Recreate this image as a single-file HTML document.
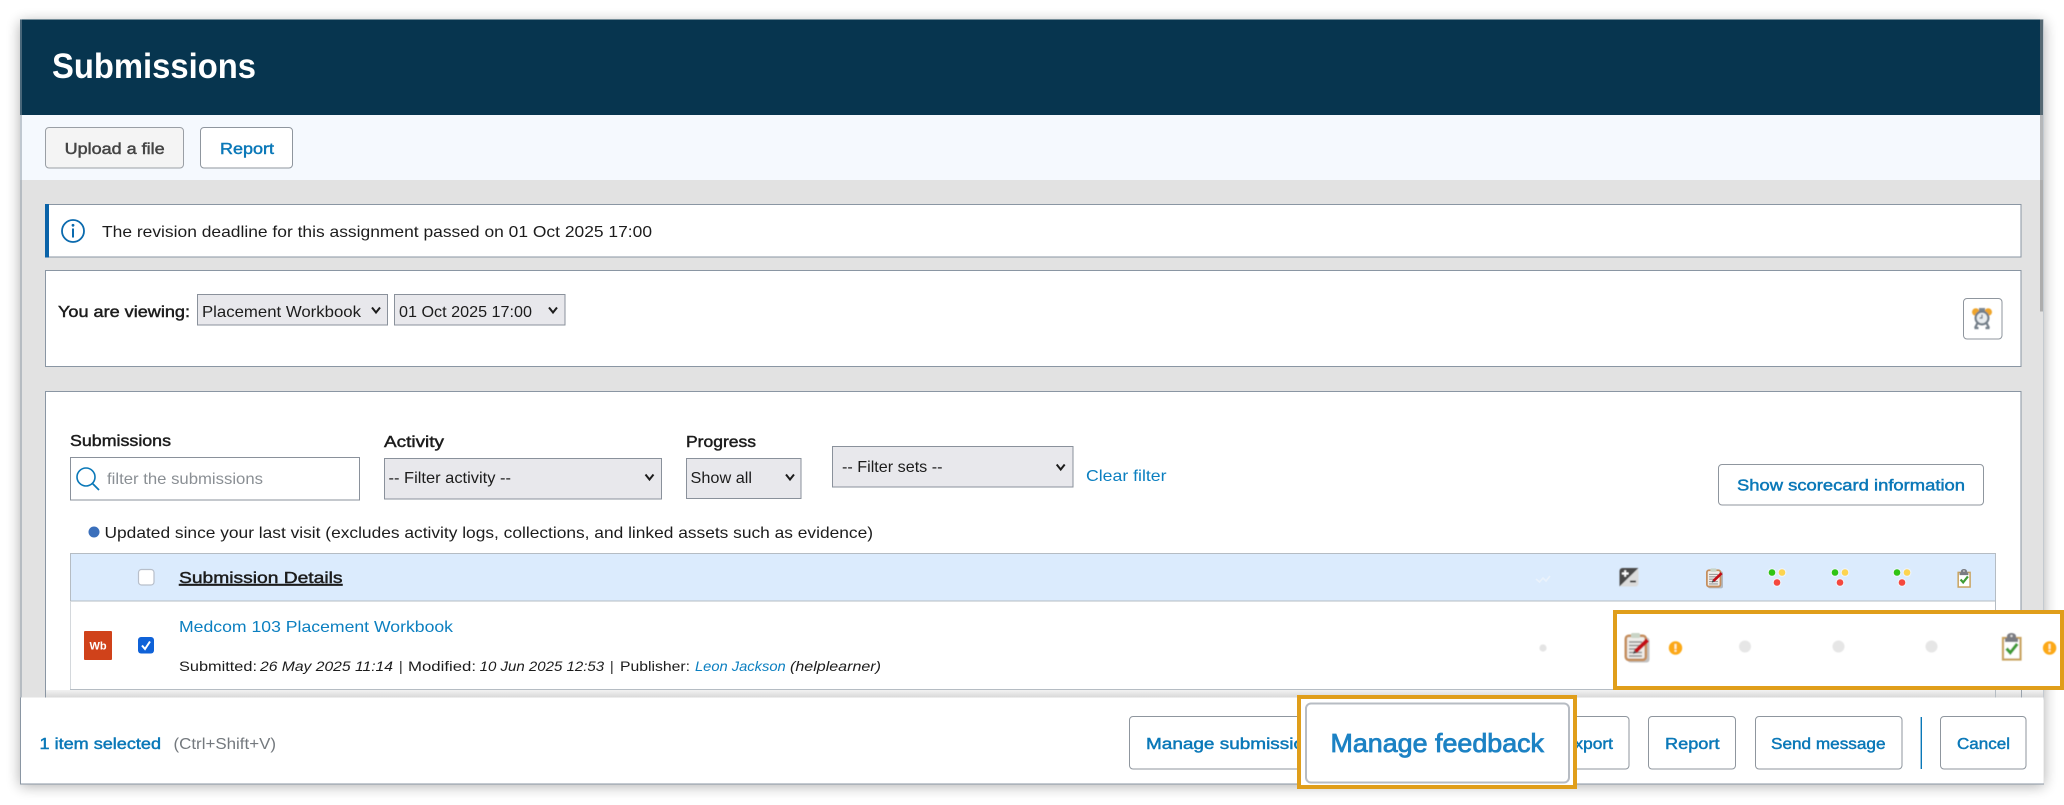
<!DOCTYPE html>
<html lang="en">
<head>
<meta charset="utf-8">
<title>Submissions</title>
<style>
html,body{margin:0;padding:0;background:#fff;width:2064px;height:805px;overflow:hidden}
svg{display:block}
text{font-family:"Liberation Sans",sans-serif;font-size:16px;fill:#1c1c1c;white-space:pre}
.b{stroke:#1c1c1c;stroke-width:.45}
.i{font-style:italic}
.s{font-size:14px}
.l{fill:#0b7fc0}
.btn{font-size:15.5px;fill:#0a78b8;stroke:#0a78b8;stroke-width:.45}
.box{fill:#fff;stroke:#8a96a3;stroke-width:1}
.sel{fill:#e8e8ec;stroke:#8a919b;stroke-width:1}
.bt{fill:#fff;stroke:#8f969e;stroke-width:1}
.chev{fill:none;stroke:#1c1c1c;stroke-width:2}
</style>
</head>
<body>
<svg width="2064" height="805" viewBox="0 0 2064 805" xmlns="http://www.w3.org/2000/svg">
<defs>
<filter id="sh" x="-5%" y="-10%" width="110%" height="120%"><feGaussianBlur stdDeviation="7"/></filter>
<filter id="soft" x="-20%" y="-20%" width="140%" height="140%"><feGaussianBlur stdDeviation="0.5"/></filter>
<filter id="soft2" x="-5%" y="-20%" width="110%" height="140%"><feGaussianBlur stdDeviation="0.35"/></filter>
<linearGradient id="fade" x1="0" y1="0" x2="0" y2="1"><stop offset="0" stop-color="#f2f2f2"/><stop offset="1" stop-color="#d6d6d6"/></linearGradient>

<g id="clip">
  <rect x="3" y="5" width="22" height="25" rx="3" fill="#8f8f8f" opacity=".55"/>
  <rect x="1.3" y="3.3" width="20" height="24" rx="3" fill="#efedea" stroke="#c58f5e" stroke-width="2.6"/>
  <rect x="6.5" y="0.5" width="9" height="5" rx="1.5" fill="#c9d4c6"/>
  <path d="M4.5 9.5h13M4.5 13h13M4.5 16.5h8M4.5 20h13M4.5 23.5h13" stroke="#9c9c9c" stroke-width="1.7"/>
  <path d="M11 19 L23 7.5" stroke="#c20f18" stroke-width="4"/>
  <path d="M8.5 21.5l1.2-3.8 2.6 2.6z" fill="#444"/>
</g>
<g id="clipchk">
  <rect x="1" y="5" width="17.5" height="21.5" fill="#fff" stroke="#c9a35f" stroke-width="2.2"/>
  <path d="M5 5 V3.2 a4.5 3.2 0 0 1 9 0 V5 h2 V9 H3 V5z" fill="#7a7c82"/>
  <circle cx="9.5" cy="3" r="1.2" fill="#ddd"/>
  <path d="M4.5 15.5l3.8 4.2 7-8.8" fill="none" stroke="#3f9c35" stroke-width="3.2"/>
</g>
<g id="warn">
  <circle cx="0" cy="0" r="6.7" fill="#fca914"/>
  <rect x="-1" y="-4" width="2" height="5" fill="#fff2cc"/>
  <rect x="-1" y="2" width="2" height="1.8" fill="#fff2cc"/>
</g>
<g id="tl">
  <circle cx="-5" cy="-4.5" r="4.4" fill="#eef4fb"/><circle cx="5" cy="-4.5" r="4.4" fill="#eef4fb"/><circle cx="0" cy="5.5" r="4.4" fill="#eef4fb"/>
  <circle cx="-5" cy="-4.5" r="3.3" fill="#2fc414"/>
  <circle cx="5" cy="-4.5" r="3.3" fill="#fdd44f"/>
  <circle cx="0" cy="5.5" r="3.3" fill="#f5483e"/>
</g>
<path id="ch" class="chev" d="M-4-2.5 L0 2.5 L4-2.5"/>
</defs>

<rect width="2064" height="805" fill="#fff"/>
<rect x="20" y="22" width="2024" height="764" fill="#000" opacity=".32" filter="url(#sh)"/>

<!-- window -->
<rect x="20" y="19" width="2024" height="765" fill="#e2e2e2"/>
<rect x="20" y="19.5" width="2024" height="96" fill="#07354f"/>
<rect x="20" y="115" width="2024" height="65" fill="#f5f9fe"/>
<rect x="20.5" y="19.5" width="1" height="680" fill="#8a96a3"/>
<rect x="2043" y="19.5" width="1" height="680" fill="#c4cad0"/>
<rect x="2040" y="19.5" width="3" height="292" fill="#8a8a8a" opacity=".6"/>

<text x="52" y="78" style="font-size:35px;font-weight:700;fill:#fff" textLength="204" lengthAdjust="spacingAndGlyphs">Submissions</text>

<!-- toolbar -->
<rect x="45.5" y="127.5" width="138" height="40.5" rx="3.5" fill="#f4f4f4" stroke="#9a9fa5" stroke-width="1"/>
<text x="64.7" y="154" class="btn" style="fill:#444;stroke:#444" textLength="100" lengthAdjust="spacingAndGlyphs">Upload a file</text>
<rect x="200.5" y="127.5" width="92" height="40.5" rx="3.5" class="bt"/>
<text x="220" y="154" class="btn" textLength="54" lengthAdjust="spacingAndGlyphs">Report</text>

<!-- info banner -->
<rect x="45.5" y="204.5" width="1975.5" height="52.5" class="box"/>
<rect x="45" y="204" width="4" height="53.5" fill="#0a63a8"/>
<circle cx="73" cy="231" r="11" fill="none" stroke="#0a6aae" stroke-width="1.8"/>
<circle cx="73" cy="225.3" r="1.4" fill="#0a6aae"/>
<rect x="72" y="228.5" width="2" height="9" fill="#0a6aae"/>
<text x="102" y="237" textLength="550" lengthAdjust="spacingAndGlyphs">The revision deadline for this assignment passed on 01 Oct 2025 17:00</text>

<!-- viewing -->
<rect x="45.5" y="270.5" width="1975.5" height="96" class="box"/>
<text x="58" y="317" class="b" textLength="132" lengthAdjust="spacingAndGlyphs">You are viewing:</text>
<rect x="197.5" y="294.5" width="190" height="30.5" class="sel"/>
<text x="202" y="317" textLength="159" lengthAdjust="spacingAndGlyphs">Placement Workbook</text>
<use href="#ch" x="376" y="310"/>
<rect x="394.5" y="294.5" width="170.5" height="30.5" class="sel"/>
<text x="399" y="317" textLength="133" lengthAdjust="spacingAndGlyphs">01 Oct 2025 17:00</text>
<use href="#ch" x="553" y="310"/>

<!-- alarm button -->
<rect x="1963.5" y="298.5" width="38.5" height="40.5" rx="3.5" class="bt"/>
<g filter="url(#soft)">
  <circle cx="1975.8" cy="312" r="3.8" fill="#efa52c"/>
  <circle cx="1988.2" cy="312" r="3.8" fill="#efa52c"/>
  <rect x="1979" y="308" width="6" height="3" fill="#7c8791"/>
  <circle cx="1982" cy="318" r="6.4" fill="#e8ecef" stroke="#737e88" stroke-width="2.2"/>
  <path d="M1982 314.5v3.5h-2.5" fill="none" stroke="#6d7680" stroke-width="1.2"/>
  <path d="M1977.5 323l-2.5 5M1986.5 323l2.5 5M1974.5 328h4M1985.5 328h4" stroke="#737e88" stroke-width="2.2"/>
</g>

<!-- main box -->
<rect x="45.5" y="391.5" width="1975.5" height="320" class="box"/>
<text x="70" y="446" class="b" textLength="101" lengthAdjust="spacingAndGlyphs">Submissions</text>
<rect x="70.5" y="457.5" width="289" height="42.5" fill="#fff" stroke="#8a919b" stroke-width="1"/>
<circle cx="86" cy="477" r="9" fill="none" stroke="#0a78b8" stroke-width="1.6"/>
<path d="M92.5 483.5L99 490" stroke="#0a78b8" stroke-width="1.8"/>
<text x="107" y="484" style="fill:#8a8f94" textLength="156" lengthAdjust="spacingAndGlyphs">filter the submissions</text>

<text x="384" y="447" class="b" textLength="60" lengthAdjust="spacingAndGlyphs">Activity</text>
<rect x="384.5" y="458.5" width="277" height="40.5" class="sel"/>
<text x="388.5" y="483" textLength="122.5" lengthAdjust="spacingAndGlyphs">-- Filter activity --</text>
<use href="#ch" x="649.5" y="477"/>

<text x="686" y="447" class="b" textLength="70" lengthAdjust="spacingAndGlyphs">Progress</text>
<rect x="686.5" y="458.5" width="114.5" height="40" class="sel"/>
<text x="690.5" y="483" textLength="61.5" lengthAdjust="spacingAndGlyphs">Show all</text>
<use href="#ch" x="790" y="477"/>

<rect x="832.5" y="446.5" width="240.5" height="40.5" class="sel"/>
<text x="842" y="472" textLength="100.5" lengthAdjust="spacingAndGlyphs">-- Filter sets --</text>
<use href="#ch" x="1060.7" y="467"/>

<text x="1086" y="481" class="l" textLength="80.5" lengthAdjust="spacingAndGlyphs">Clear filter</text>

<rect x="1718.5" y="464.5" width="265" height="40.5" rx="3.5" class="bt"/>
<text x="1737" y="490.5" class="btn" textLength="228" lengthAdjust="spacingAndGlyphs">Show scorecard information</text>

<circle cx="94" cy="532" r="5.5" fill="#3a6fbb"/>
<text x="104.5" y="538" textLength="768.5" lengthAdjust="spacingAndGlyphs">Updated since your last visit (excludes activity logs, collections, and linked assets such as evidence)</text>

<!-- table -->
<rect x="70" y="553" width="1925.5" height="144" fill="#fff"/>
<rect x="70.5" y="553.5" width="1925" height="47.5" fill="#dbebfd" stroke="#b5bcc3" stroke-width="1"/>
<rect x="70" y="601" width="1" height="96" fill="#d4d8dc"/>
<rect x="1995" y="601" width="1" height="96" fill="#b5bcc3"/>
<rect x="138.5" y="569.5" width="15.5" height="15.5" rx="3" fill="#fff" stroke="#b8bfca" stroke-width="1.2"/>
<text x="179" y="583" class="b" textLength="163.5" lengthAdjust="spacingAndGlyphs" text-decoration="underline">Submission Details</text>

<!-- header icons -->
<path d="M1536 579l3.5 3 3.5-4 3 3 4-5" fill="none" stroke="#eaf2fb" stroke-width="1.6"/>
<g filter="url(#soft)">
  <rect x="1619.5" y="568" width="19" height="18.5" rx="3" fill="#dcdcdc"/>
  <path d="M1638.5 568 H1622.5 a3 3 0 0 0-3 3 V586.5z" fill="#4a4a4a"/>
  <path d="M1622 573.5h6.5M1625.2 570.3v6.5" stroke="#fff" stroke-width="1.9"/>
  <path d="M1630 581.5h6" stroke="#333" stroke-width="1.9"/>
</g>
<use href="#clip" transform="translate(1706,568) scale(.68)" filter="url(#soft)"/>
<use href="#tl" x="1777" y="577"/>
<use href="#tl" x="1840" y="577"/>
<use href="#tl" x="1902" y="577"/>
<use href="#clipchk" transform="translate(1957.5,569) scale(.68)" filter="url(#soft)"/>

<!-- row -->
<rect x="84" y="631" width="28" height="29" rx="1" fill="#d0421a"/>
<text x="98" y="649.5" text-anchor="middle" style="font-size:11px;font-weight:700;fill:#fff">Wb</text>
<rect x="138" y="637" width="16" height="16.5" rx="3" fill="#0f62d8"/>
<path d="M142 645.5l3 3.5 5-7.5" fill="none" stroke="#fff" stroke-width="2"/>
<text x="179" y="632" class="l" textLength="274" lengthAdjust="spacingAndGlyphs">Medcom 103 Placement Workbook</text>

<text x="179" y="671" class="s" textLength="78" lengthAdjust="spacingAndGlyphs">Submitted:</text>
<text x="260" y="671" class="s i" textLength="133" lengthAdjust="spacingAndGlyphs">26 May 2025 11:14</text>
<text x="399" y="671" class="s">|</text>
<text x="408" y="671" class="s" textLength="68" lengthAdjust="spacingAndGlyphs">Modified:</text>
<text x="479.6" y="671" class="s i" textLength="124.5" lengthAdjust="spacingAndGlyphs">10 Jun 2025 12:53</text>
<text x="610" y="671" class="s">|</text>
<text x="620" y="671" class="s" textLength="70" lengthAdjust="spacingAndGlyphs">Publisher:</text>
<text x="695" y="671" class="s i l" textLength="90.7" lengthAdjust="spacingAndGlyphs">Leon Jackson</text>
<text x="790" y="671" class="s i" textLength="91" lengthAdjust="spacingAndGlyphs">(helplearner)</text>
<circle cx="1543" cy="648" r="3.6" fill="#e4e4e4" filter="url(#soft)"/>

<rect x="70" y="689" width="1925.5" height="1" fill="#b5bcc3"/>
<rect x="46" y="690" width="1997" height="8" fill="url(#fade)"/>
<rect x="1995" y="690" width="1" height="8" fill="#b5bcc3"/>
<rect x="2021" y="690" width="1" height="8" fill="#9aa3ad"/>

<!-- highlight over row -->
<rect x="1615" y="612" width="447" height="76" fill="#fff" stroke="#e09e1a" stroke-width="4"/>
<use href="#clip" transform="translate(1624.5,632.5)" filter="url(#soft)"/>
<use href="#warn" x="1675.5" y="648" filter="url(#soft)"/>
<circle cx="1745" cy="646.5" r="6" fill="#e6e6e6" filter="url(#soft)"/>
<circle cx="1838.5" cy="646.5" r="6" fill="#e6e6e6" filter="url(#soft)"/>
<circle cx="1931.5" cy="646.5" r="6" fill="#e6e6e6" filter="url(#soft)"/>
<use href="#clipchk" transform="translate(2002,633)" filter="url(#soft)"/>
<use href="#warn" x="2049.6" y="648" filter="url(#soft)"/>

<!-- footer -->
<rect x="20" y="697.5" width="2023.5" height="86.5" fill="#fff"/>
<rect x="20" y="697.5" width="1" height="86.5" fill="#8a96a3"/>
<rect x="20" y="783.5" width="2024" height="1" fill="#8a96a3"/>
<text x="39.5" y="749" class="btn" textLength="121.5" lengthAdjust="spacingAndGlyphs">1 item selected</text>
<text x="173.5" y="749" style="font-size:15.5px;fill:#74797e" textLength="102.5" lengthAdjust="spacingAndGlyphs">(Ctrl+Shift+V)</text>

<rect x="1129.5" y="716.5" width="200" height="52.5" rx="3.5" class="bt"/>
<text x="1146" y="749" class="btn" textLength="178" lengthAdjust="spacingAndGlyphs">Manage submissions</text>
<rect x="1500" y="716.5" width="129" height="52.5" rx="3.5" class="bt"/>
<text x="1563" y="749" class="btn" textLength="50" lengthAdjust="spacingAndGlyphs">Export</text>
<rect x="1648.5" y="716.5" width="87" height="52.5" rx="3.5" class="bt"/>
<text x="1665" y="749" class="btn" textLength="54.5" lengthAdjust="spacingAndGlyphs">Report</text>
<rect x="1755.5" y="716.5" width="146.5" height="52.5" rx="3.5" class="bt"/>
<text x="1771" y="749" class="btn" textLength="114.5" lengthAdjust="spacingAndGlyphs">Send message</text>
<rect x="1920.6" y="717" width="1.4" height="52" fill="#0a78b8"/>
<rect x="1940.5" y="716.5" width="85.5" height="52.5" rx="3.5" class="bt"/>
<text x="1957" y="749" class="btn" textLength="53" lengthAdjust="spacingAndGlyphs">Cancel</text>

<!-- Manage feedback highlight -->
<rect x="1299" y="697" width="276" height="90" fill="#fff" stroke="#e09e1a" stroke-width="4"/>
<rect x="1306" y="703.5" width="263" height="79" rx="5" fill="#fff" stroke="#b7bcc3" stroke-width="2"/>
<text x="1330.5" y="752" style="font-size:26px;fill:#1c82c4;stroke:#1c82c4;stroke-width:.8" textLength="213.5" lengthAdjust="spacingAndGlyphs" filter="url(#soft2)">Manage feedback</text>
</svg>
</body>
</html>
